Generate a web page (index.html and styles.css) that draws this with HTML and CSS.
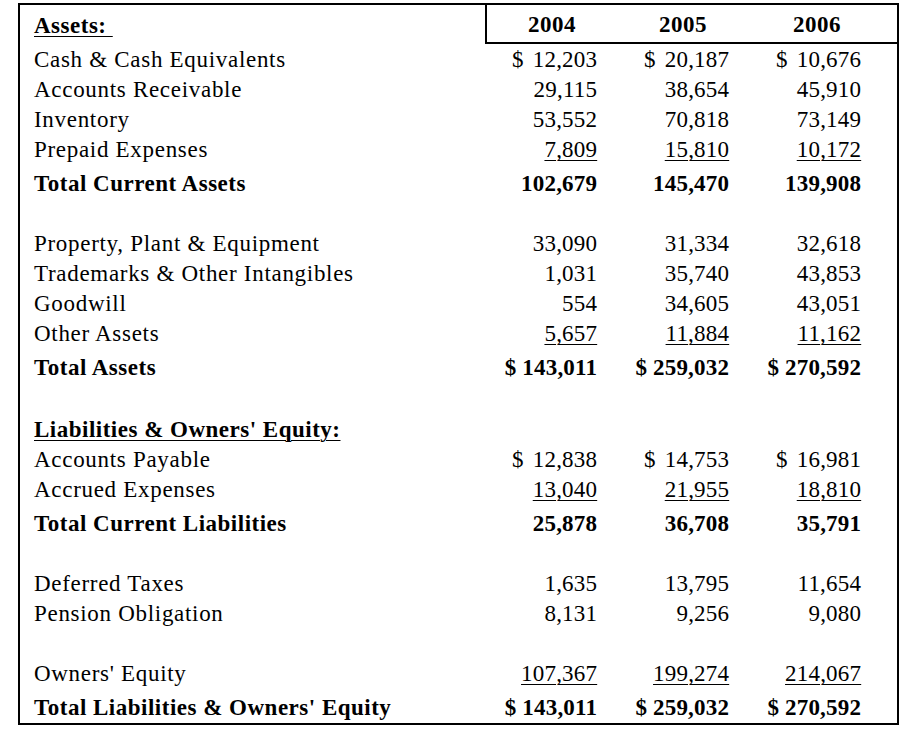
FILE: index.html
```html
<!DOCTYPE html>
<html>
<head>
<meta charset="utf-8">
<link rel="stylesheet" href="styles.css">
</head>
<body>
<div class="sheet">
  <div class="head">
    <div class="label section"><span class="u">Assets:&nbsp;</span></div>
    <div class="years">
      <div class="year">2004</div>
      <div class="year">2005</div>
      <div class="year">2006</div>
    </div>
  </div>

  <div class="row"><div class="label">Cash &amp; Cash Equivalents</div>
    <div class="amt"><span>$</span><span>12,203</span></div>
    <div class="amt"><span>$</span><span>20,187</span></div>
    <div class="amt"><span>$</span><span>10,676</span></div></div>
  <div class="row"><div class="label">Accounts Receivable</div>
    <div class="amt"><span>29,115</span></div>
    <div class="amt"><span>38,654</span></div>
    <div class="amt"><span>45,910</span></div></div>
  <div class="row"><div class="label">Inventory</div>
    <div class="amt"><span>53,552</span></div>
    <div class="amt"><span>70,818</span></div>
    <div class="amt"><span>73,149</span></div></div>
  <div class="row"><div class="label">Prepaid Expenses</div>
    <div class="amt"><span class="u">7,809</span></div>
    <div class="amt"><span class="u">15,810</span></div>
    <div class="amt"><span class="u">10,172</span></div></div>
  <div class="row total"><div class="label">Total Current Assets</div>
    <div class="amt"><span>102,679</span></div>
    <div class="amt"><span>145,470</span></div>
    <div class="amt"><span>139,908</span></div></div>

  <div class="row blank"></div>

  <div class="row"><div class="label">Property, Plant &amp; Equipment</div>
    <div class="amt"><span>33,090</span></div>
    <div class="amt"><span>31,334</span></div>
    <div class="amt"><span>32,618</span></div></div>
  <div class="row"><div class="label">Trademarks &amp; Other Intangibles</div>
    <div class="amt"><span>1,031</span></div>
    <div class="amt"><span>35,740</span></div>
    <div class="amt"><span>43,853</span></div></div>
  <div class="row"><div class="label">Goodwill</div>
    <div class="amt"><span>554</span></div>
    <div class="amt"><span>34,605</span></div>
    <div class="amt"><span>43,051</span></div></div>
  <div class="row"><div class="label">Other Assets</div>
    <div class="amt"><span class="u">5,657</span></div>
    <div class="amt"><span class="u">11,884</span></div>
    <div class="amt"><span class="u">11,162</span></div></div>
  <div class="row total"><div class="label">Total Assets</div>
    <div class="amt tight"><span>$ 143,011</span></div>
    <div class="amt tight"><span>$ 259,032</span></div>
    <div class="amt tight"><span>$ 270,592</span></div></div>

  <div class="row blank wide"></div>

  <div class="row"><div class="label section"><span class="u">Liabilities &amp; Owners' Equity:</span></div></div>
  <div class="row"><div class="label">Accounts Payable</div>
    <div class="amt"><span>$</span><span>12,838</span></div>
    <div class="amt"><span>$</span><span>14,753</span></div>
    <div class="amt"><span>$</span><span>16,981</span></div></div>
  <div class="row"><div class="label">Accrued Expenses</div>
    <div class="amt"><span class="u">13,040</span></div>
    <div class="amt"><span class="u">21,955</span></div>
    <div class="amt"><span class="u">18,810</span></div></div>
  <div class="row total"><div class="label">Total Current Liabilities</div>
    <div class="amt"><span>25,878</span></div>
    <div class="amt"><span>36,708</span></div>
    <div class="amt"><span>35,791</span></div></div>

  <div class="row blank"></div>

  <div class="row"><div class="label">Deferred Taxes</div>
    <div class="amt"><span>1,635</span></div>
    <div class="amt"><span>13,795</span></div>
    <div class="amt"><span>11,654</span></div></div>
  <div class="row"><div class="label">Pension Obligation</div>
    <div class="amt"><span>8,131</span></div>
    <div class="amt"><span>9,256</span></div>
    <div class="amt"><span>9,080</span></div></div>

  <div class="row blank"></div>

  <div class="row"><div class="label">Owners' Equity</div>
    <div class="amt"><span class="u">107,367</span></div>
    <div class="amt"><span class="u">199,274</span></div>
    <div class="amt"><span class="u">214,067</span></div></div>
  <div class="row total"><div class="label">Total Liabilities &amp; Owners' Equity</div>
    <div class="amt tight"><span>$ 143,011</span></div>
    <div class="amt tight"><span>$ 259,032</span></div>
    <div class="amt tight"><span>$ 270,592</span></div></div>
</div>
</body>
</html>
```
FILE: styles.css
```css
html, body {
  margin: 0;
  padding: 0;
  background: #fff;
}
body {
  font-family: "Liberation Serif", "Times New Roman", serif;
  font-size: 23px;
  color: #000;
}
.sheet {
  box-sizing: border-box;
  margin: 3px 0 0 18px;
  width: 881px;
  height: 722px;
  border: 2px solid #000;
}
.head {
  display: flex;
  height: 39px;
}
.head .label {
  box-sizing: border-box;
  width: 465px;
  flex: none;
  display: flex;
  align-items: center;
  padding-top: 2px;
}
.years {
  flex: 1;
  box-sizing: border-box;
  border-left: 2px solid #000;
  border-bottom: 2px solid #000;
  display: grid;
  grid-template-columns: 130px 132px 136px;
  align-items: center;
  font-weight: bold;
  letter-spacing: 0.5px;
}
.year {
  text-align: center;
  padding-top: 3px;
}
.row {
  display: grid;
  grid-template-columns: 465px 132px 132px 132px;
  height: 30px;
  align-items: center;
}
.head + .row {
  height: 31px;
}
.row.total {
  height: 34px;
  padding-top: 4px;
  box-sizing: border-box;
  font-weight: bold;
}
.row.blank.wide {
  height: 32px;
}
.label {
  box-sizing: border-box;
  padding-left: 14px;
  white-space: nowrap;
  letter-spacing: 0.7px;
}
.total .label, .section {
  font-weight: bold;
  letter-spacing: 0.5px;
}
.amt {
  display: flex;
  justify-content: flex-end;
  padding: 0 20px 0 27px;
  white-space: nowrap;
  letter-spacing: 0.2px;
}
.amt span:last-child {
  margin-right: -0.2px;
}
.amt span:first-child:not(:last-child) {
  margin-right: auto;
}
.amt.tight {
  padding-left: 15px;
}
.u {
  text-decoration: underline;
  text-decoration-thickness: 1px;
  text-underline-offset: 3px;
}
```
